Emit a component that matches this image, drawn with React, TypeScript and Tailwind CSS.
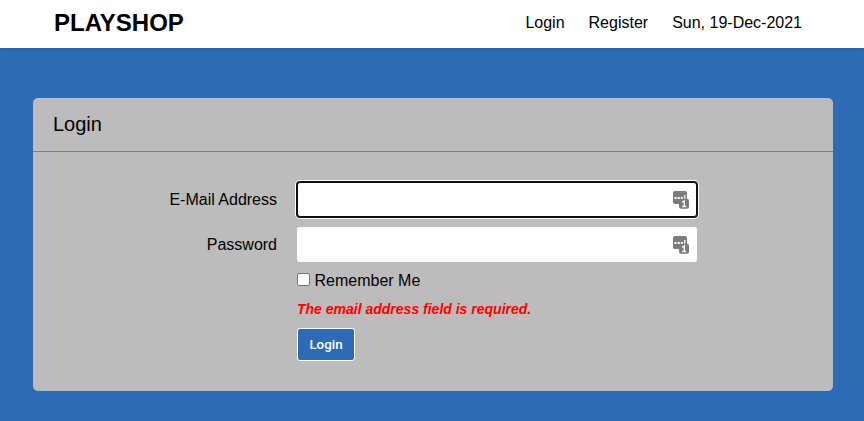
function KeyIcon() {
  return (
    <svg width="17" height="19" viewBox="0 0 17 19" className="shrink-0">
      <rect x="0" y="1" width="14" height="13" rx="2" fill="#7b7b7b" />
      <g fill="#fff"><rect x="1.5" y="7" width="2" height="2" /><rect x="4.7" y="7" width="2" height="2" /><rect x="7.9" y="7" width="2" height="2" /><rect x="11.2" y="5" width="1.2" height="4" /></g>
      <rect x="6" y="8.8" width="10" height="10" rx="2" fill="#7b7b7b" />
      <path d="M9.2 12.3L11.3 11V16.8M9.2 16.5H13.2" fill="none" stroke="#fff" strokeWidth="1.4" />
    </svg>
  );
}

export default function App() {
  return (
    <div className="h-[421px] w-[864px] overflow-hidden bg-[#2d6cb5] font-['Liberation_Sans',Arial,sans-serif] text-base leading-6 text-black">
      <header className="flex h-12 items-center bg-white pr-[62px] pl-[54px] pb-[2px] shadow-[0_2px_4px_rgba(0,0,0,0.12)]">
        <div className="grow text-2xl font-bold">PLAYSHOP</div>
        <nav className="flex gap-6">
          <a>Login</a>
          <a>Register</a>
          <span>Sun, 19-Dec-2021</span>
        </nav>
      </header>
      <main className="mt-[50px] ml-[33px] h-[293px] w-[800px] rounded-[5px] bg-[#bcbcbc]">
        <h1 className="flex h-[54px] items-center border-b border-[#808080] px-5 pb-[2px] text-xl">Login</h1>
        <form className="flex flex-col pt-[30px]">
          <label className="flex items-center">
            <span className="mr-5 w-[244px] text-right">E-Mail Address</span>
            <span className="flex h-[35px] w-[400px] items-center justify-end rounded-[3px] border border-[#101010] bg-white pr-[6px] shadow-[0_0_0_1px_#101010,0_0_0_2px_white]"><KeyIcon /></span>
          </label>
          <label className="mt-[10px] flex items-center">
            <span className="mr-5 w-[244px] text-right">Password</span>
            <span className="flex h-[35px] w-[400px] items-center justify-end rounded-[3px] bg-white pr-[7px]"><KeyIcon /></span>
          </label>
          <div className="ml-[264px] flex flex-col items-start">
            <label className="mt-[7px] flex items-center gap-[4.5px]">
              <span className="mb-[3px] size-[13px] rounded-[2px] border border-[#767676] bg-white" />Remember Me
            </label>
            <p className="mt-[6px] text-sm leading-5 font-bold text-[#ff0000] italic">The email address field is required.</p>
            <button className="mt-[9px] h-[33px] w-[58px] rounded-[3px] border border-white bg-[#2d6cb5] font-['Roboto',sans-serif] text-[13.33px] font-medium text-white">Login</button>
          </div>
        </form>
      </main>
    </div>
  );
}
